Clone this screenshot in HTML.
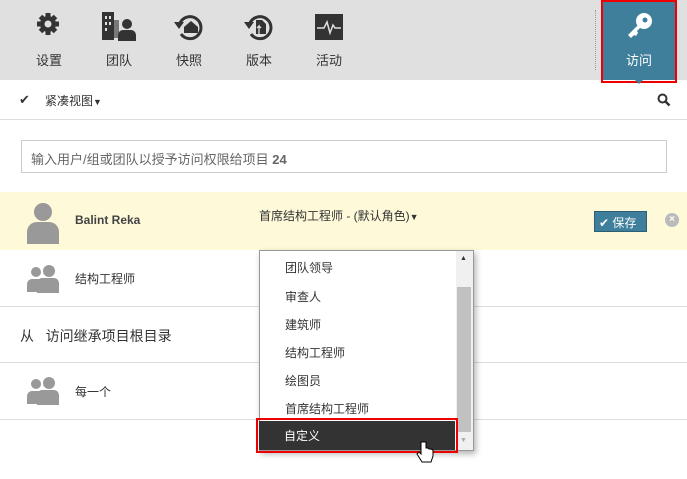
<!DOCTYPE html>
<html><head><meta charset="utf-8"><style>
*{box-sizing:border-box;margin:0;padding:0}
body{width:687px;height:479px;overflow:hidden;background:#fff;font-family:"Liberation Sans","Noto Sans CJK SC",sans-serif;font-size:13px;color:#333;position:relative}
.abs{position:absolute}
.top{left:0;top:0;width:687px;height:80px;background:#e0e0e0}
.tl{font-size:13px;color:#333;text-align:center;width:60px}
.line{left:0;width:687px;height:1px;background:#ddd}
.menu{left:259px;top:250px;width:215px;height:201px;background:#fff;border:1px solid #999;box-shadow:2px 3px 6px rgba(0,0,0,.3)}
.mi{position:absolute;left:25px;font-size:12px;color:#333}
</style></head><body>
<div class="abs top"></div>
<!-- gear -->
<svg class="abs" style="left:36px;top:12px" width="24" height="24" viewBox="0 0 24 24"><g fill="#333"><circle cx="12" cy="12" r="8"/><g stroke="#333" stroke-width="5"><line x1="12" y1="1" x2="12" y2="23"/><line x1="1" y1="12" x2="23" y2="12"/><line x1="4.5" y1="4.5" x2="19.5" y2="19.5"/><line x1="19.5" y1="4.5" x2="4.5" y2="19.5"/></g></g><circle cx="12" cy="12" r="3.5" fill="#e0e0e0"/></svg>
<div class="abs tl" style="left:19px;top:50px">设置</div>
<!-- team -->
<svg class="abs" style="left:102px;top:12px" width="34" height="30" viewBox="0 0 34 30"><rect x="0" y="0" width="12" height="28" fill="#333"/><g fill="#e0e0e0"><rect x="3" y="4" width="2" height="3"/><rect x="7" y="4" width="2" height="3"/><rect x="3" y="10" width="2" height="3"/><rect x="7" y="10" width="2" height="3"/><rect x="3" y="16" width="2" height="3"/></g><rect x="12" y="8" width="5" height="18" fill="#333" opacity=".6"/><circle cx="25" cy="12" r="5" fill="#333"/><path d="M16 29v-6a5 5 0 0 1 5-5h8a5 5 0 0 1 5 5v6z" fill="#333"/></svg>
<div class="abs tl" style="left:89px;top:50px">团队</div>
<!-- snapshot -->
<svg class="abs" style="left:173px;top:12px" width="32" height="30" viewBox="0 0 32 30"><path d="M7 11A11 11 0 1 1 8 22" fill="none" stroke="#333" stroke-width="3"/><path d="M1 10h10l-5 7z" fill="#333"/><path d="M11 15l7-6 7 6v6H11z" fill="#333"/></svg>
<div class="abs tl" style="left:159px;top:50px">快照</div>
<!-- version -->
<svg class="abs" style="left:243px;top:12px" width="32" height="30" viewBox="0 0 32 30"><path d="M7 11A11 11 0 1 1 8 22" fill="none" stroke="#333" stroke-width="3"/><path d="M1 10h10l-5 7z" fill="#333"/><path d="M13 8h6l4 4v10H13z" fill="#333"/><path d="M16 22V14l-2 2M16 14l2 2" stroke="#e0e0e0" stroke-width="1.3" fill="none"/></svg>
<div class="abs tl" style="left:229px;top:50px">版本</div>
<!-- activity -->
<svg class="abs" style="left:315px;top:14px" width="28" height="26" viewBox="0 0 28 26"><rect width="28" height="26" fill="#333"/><path d="M2 14h7l3-6 3 11 3-8 2 3h6" stroke="#e0e0e0" stroke-width="1.5" fill="none"/></svg>
<div class="abs tl" style="left:299px;top:50px">活动</div>
<div class="abs" style="left:595px;top:10px;height:60px;border-left:1px dotted #999"></div>
<div class="abs" style="left:601px;top:0;width:76px;height:83px;border:2px solid #e00"></div>
<div class="abs" style="left:603px;top:2px;width:72px;height:78px;background:#3f7f9b"></div>
<svg class="abs" style="left:626px;top:12px" width="28" height="28" viewBox="0 0 28 28"><circle cx="18" cy="9" r="8" fill="#fff"/><circle cx="19" cy="8" r="2.5" fill="#3f7f9b"/><path d="M12 13l-10 10 3 3 3-3 2 1 2-3-1-2 5-5z" fill="#fff"/></svg>
<div class="abs" style="left:603px;top:50px;width:72px;text-align:center;color:#fff;font-size:13px">访问</div>
<div class="abs" style="left:635px;top:80px;border:4px solid transparent;border-top-color:#3f7f9b"></div>
<!-- row2 -->
<div class="abs" style="left:19px;top:92px;font-size:13px">✔</div>
<div class="abs" style="left:45px;top:92px;font-size:12px">紧凑视图<span style="font-size:9px">▼</span></div>
<svg class="abs" style="left:657px;top:93px" width="14" height="14" viewBox="0 0 14 14"><circle cx="5.5" cy="5.5" r="4" fill="none" stroke="#333" stroke-width="2"/><path d="M8.5 8.5l4 4" stroke="#333" stroke-width="2.5"/></svg>
<div class="abs line" style="top:119px"></div>
<div class="abs" style="left:21px;top:140px;width:646px;height:33px;border:1px solid #ccc;padding:8px 9px;font-size:13px;color:#666">输入用户/组或团队以授予访问权限给项目 <b>24</b></div>
<!-- yellow row -->
<div class="abs" style="left:0;top:192px;width:687px;height:58px;background:#fdf9d9"></div>
<svg class="abs" style="left:26px;top:202px" width="34" height="42" viewBox="0 0 34 42"><circle cx="17" cy="10" r="9" fill="#999"/><path d="M1 42v-12a10 10 0 0 1 10-10h12a10 10 0 0 1 10 10v12z" fill="#999"/></svg>
<div class="abs" style="left:75px;top:213px;font-weight:bold;font-size:12px;color:#444">Balint Reka</div>
<div class="abs" style="left:259px;top:207px;font-size:12px">首席结构工程师 - (默认角色)<span style="font-size:9px">▼</span></div>
<div class="abs" style="left:594px;top:211px;width:53px;height:21px;background:#3f7f9b;border:1px solid #2c5f74;color:#fff;font-size:12px;padding:2px 4px">✔ 保存</div>
<div class="abs" style="left:665px;top:213px;width:14px;height:14px;border-radius:50%;background:#bbb;color:#fff;font-size:10px;text-align:center;line-height:14px;font-weight:bold">×</div>
<!-- rows -->
<svg class="abs" style="left:27px;top:265px" width="32" height="28" viewBox="0 0 32 28"><circle cx="9" cy="7" r="5" fill="#999"/><circle cx="22" cy="6" r="6" fill="#999"/><path d="M0 27v-8a5 5 0 0 1 5-5h8v13z" fill="#999"/><path d="M10 28v-10a5 5 0 0 1 5-5h12a5 5 0 0 1 5 5v10z" fill="#999"/></svg>
<div class="abs" style="left:75px;top:270px;font-size:12px">结构工程师</div>
<div class="abs line" style="top:306px"></div>
<div class="abs" style="left:20px;top:326px;font-size:14px">从&nbsp;&nbsp;&nbsp;访问继承项目根目录</div>
<div class="abs line" style="top:362px"></div>
<svg class="abs" style="left:27px;top:377px" width="32" height="28" viewBox="0 0 32 28"><circle cx="9" cy="7" r="5" fill="#999"/><circle cx="22" cy="6" r="6" fill="#999"/><path d="M0 27v-8a5 5 0 0 1 5-5h8v13z" fill="#999"/><path d="M10 28v-10a5 5 0 0 1 5-5h12a5 5 0 0 1 5 5v10z" fill="#999"/></svg>
<div class="abs" style="left:75px;top:383px;font-size:12px">每一个</div>
<div class="abs line" style="top:419px"></div>
<!-- dropdown -->
<div class="abs menu">
<div class="mi" style="top:8px">团队领导</div>
<div class="mi" style="top:37px">审查人</div>
<div class="mi" style="top:65px">建筑师</div>
<div class="mi" style="top:93px">结构工程师</div>
<div class="mi" style="top:121px">绘图员</div>
<div class="mi" style="top:149px">首席结构工程师</div>
<div class="abs" style="left:196px;top:0;width:17px;height:199px;background:#f0f0f0"></div>
<div class="abs" style="left:197px;top:36px;width:14px;height:145px;background:#c1c1c1"></div>
<div class="abs" style="left:200px;top:4px;font-size:7px;color:#333">▲</div>
<div class="abs" style="left:200px;top:186px;font-size:7px;color:#aaa">▼</div>
</div>
<div class="abs" style="left:256px;top:418px;width:202px;height:35px;border:2px solid #e00"></div>
<div class="abs" style="left:259px;top:421px;width:196px;height:29px;background:#333;color:#fff;font-size:12px;padding:6px 25px">自定义</div>
<svg class="abs" style="left:416px;top:441px" width="18" height="24" viewBox="0 0 18 24"><path d="M5 1v12l-2-2-2 2 5 8h9l2-6v-6l-2-1-2 0-1-1-2 0V1z" fill="#fff" stroke="#000" stroke-width="1"/></svg>
</body></html>
